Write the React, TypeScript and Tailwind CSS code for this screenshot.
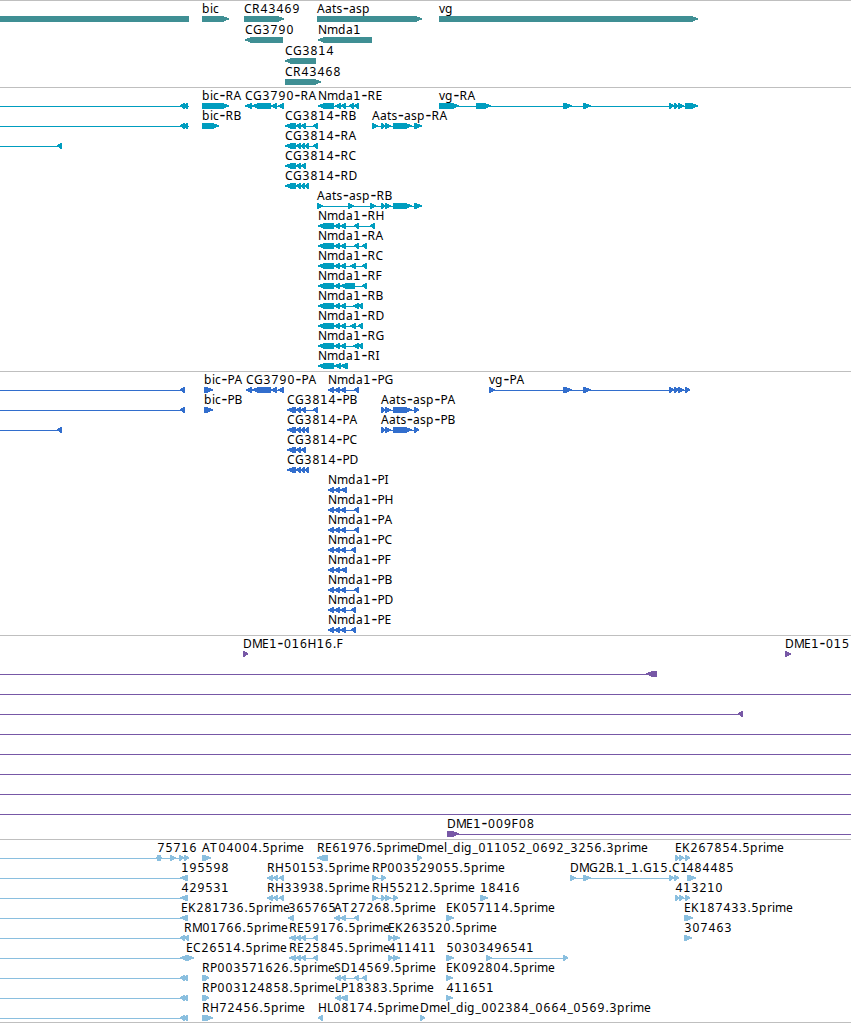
type Dir = "L" | "R" | "N";
type Exon = [number, number, Dir?];
interface Feature {
  label?: string;
  x?: number;
  dir: Dir;
  exons: Exon[];
  line?: [number, number];
}
interface Track {
  name: string;
  color: string;
  rowHeight: number;
  className: string;
  rows: Feature[][];
}

const WIDTH = 851;

/* Advance width in pixels of each character of a feature label. */
const ADVANCE: Record<string, number> = {
  A: 8, B: 7, C: 8, D: 9, E: 7, F: 7, G: 9, H: 9, I: 3, K: 8, L: 6, M: 10, N: 9, P: 7, R: 8, S: 7, T: 8,
  a: 7, b: 8, c: 6, d: 8, e: 7, g: 8, i: 3, l: 3, m: 11, p: 8, r: 5, s: 6, t: 4.5, v: 6,
  "-": 6.5, "_": 6, ".": 4,
};

/* Offset that centres a glyph in its advance. */
const NUDGE: Record<string, number> = { "-": 0.5, ".": 0.5, "_": 0.5, "1": 0 };

interface Run {
  text: string;
  xs: number[];
  kind: "plain" | "one" | "dash";
}

function labelRuns(text: string, start: number): Run[] {
  const runs: Run[] = [];
  let x = start;
  for (const c of text) {
    const kind = c === "1" ? "one" : c === "-" ? "dash" : "plain";
    const at = x + (NUDGE[c] ?? (/\d/.test(c) ? 0.5 : 0));
    const last = runs[runs.length - 1];
    if (last && last.kind === kind) {
      last.text += c;
      last.xs.push(at);
    } else {
      runs.push({ text: c, xs: [at], kind });
    }
    x += ADVANCE[c] ?? 8;
  }
  return runs;
}

const RUN_CLASS = {
  plain: "font-['Noto_Sans',sans-serif] text-[12px]",
  one: "font-['DejaVu_Sans',sans-serif] text-[12px]",
  dash: "font-['Noto_Sans',sans-serif] text-[18px]",
};

function f(label: string, x: number, dir: Dir, ...exons: Exon[]): Feature {
  return { label, x, dir, exons };
}

function bare(to: number, dir: Dir, ...exons: Exon[]): Feature {
  return { dir, exons, line: [0, to] };
}

const nmdaR: Exon[] = [[318, 334], [334, 340], [340, 346]];
const nmdaP: Exon[] = [[328, 334], [334, 340], [340, 346]];
const nmdaPShort: Exon[] = [[328, 334], [334, 340], [340, 347]];
const aatsTail: Exon[] = [[381, 385], [385, 391], [393, 412], [414, 422]];
const aatsP: Exon[] = [[381, 385], [385, 391], [393, 412], [414, 419]];
const cgRC: Exon[] = [[285, 296], [296, 301], [301, 306]];
const cgRD: Exon[] = [[285, 296], [296, 301], [301, 305], [305, 309]];
const cgPC: Exon[] = [[287, 296], [296, 301], [301, 306]];
const cgPD: Exon[] = [[287, 296], [296, 301], [301, 305], [305, 309]];
const rh: Exon[] = [[267, 273], [273, 278], [279, 284]];
const re: Exon[] = [[289, 296], [296, 301], [301, 306], [313, 318]];
const ek26: Exon[] = [[675, 679], [679, 684], [685, 690]];

const tracks: Track[] = [
  {
    name: "Genes",
    color: "#3f8f94",
    rowHeight: 21,
    className: "pt-[2px]",
    rows: [
      [
        { dir: "N", exons: [[0, 189]] },
        f("bic", 202, "R", [202, 229]),
        f("CR43469", 244, "R", [244, 284]),
        f("Aats-asp", 317, "R", [317, 422]),
        f("vg", 439, "R", [439, 698]),
      ],
      [f("CG3790", 245, "L", [245, 283]), f("Nmda1", 318, "L", [318, 372])],
      [f("CG3814", 285, "L", [285, 316])],
      [f("CR43468", 285, "R", [285, 321])],
    ],
  },
  {
    name: "Transcripts",
    color: "#009dbf",
    rowHeight: 20,
    className: "pt-[2px] pb-px",
    rows: [
      [
        bare(189, "L", [180, 185], [184, 188]),
        f("bic-RA", 202, "R", [202, 229]),
        f("CG3790-RA", 245, "L", [245, 252], [252, 271], [271, 277], [278, 284]),
        f("Nmda1-RE", 318, "L", [318, 334], [335, 341], [341, 346], [349, 354], [354, 359]),
        f("vg-RA", 439, "R", [439, 459], [476, 491], [563, 572], [583, 591], [669, 674], [674, 678], [678, 684], [685, 698]),
      ],
      [
        bare(189, "L", [180, 185], [184, 188]),
        f("bic-RB", 202, "R", [202, 219]),
        f("CG3814-RB", 285, "L", ...cgRC, [313, 318]),
        f("Aats-asp-RA", 372, "R", [372, 378], ...aatsTail),
      ],
      [bare(62, "L", [57, 62]), f("CG3814-RA", 285, "L", ...cgRD, [313, 318])],
      [f("CG3814-RC", 285, "L", ...cgRC)],
      [f("CG3814-RD", 285, "L", ...cgRD)],
      [f("Aats-asp-RB", 317, "R", [317, 323], [348, 354], [370, 376], ...aatsTail)],
      [f("Nmda1-RH", 318, "L", ...nmdaR, [354, 359], [370, 375])],
      [f("Nmda1-RA", 318, "L", ...nmdaR, [354, 359], [362, 367])],
      [f("Nmda1-RC", 318, "L", ...nmdaR, [350, 356], [362, 367])],
      [f("Nmda1-RF", 318, "L", [318, 334], [334, 340], [340, 355], [362, 367])],
      [f("Nmda1-RB", 318, "L", ...nmdaR, [353, 359], [358, 363])],
      [f("Nmda1-RD", 318, "L", ...nmdaR, [350, 356], [358, 363])],
      [f("Nmda1-RG", 318, "L", ...nmdaR, [353, 359], [358, 363])],
      [f("Nmda1-RI", 318, "L", [318, 334], [334, 341], [340, 348])],
    ],
  },
  {
    name: "Proteins",
    color: "#326ecd",
    rowHeight: 20,
    className: "pt-[2px] pb-px",
    rows: [
      [
        bare(185, "L", [180, 185]),
        f("bic-PA", 204, "R", [204, 213]),
        f("CG3790-PA", 246, "L", [246, 252], [252, 271], [271, 277], [278, 284]),
        f("Nmda1-PG", 328, "L", ...nmdaP, [354, 359]),
        f("vg-PA", 489, "R", [489, 495], [563, 572], [583, 591], [669, 674], [674, 679], [678, 684], [685, 690]),
      ],
      [
        bare(185, "L", [180, 185]),
        f("bic-PB", 204, "R", [204, 213]),
        f("CG3814-PB", 287, "L", ...cgPC, [313, 318]),
        f("Aats-asp-PA", 381, "R", ...aatsP),
      ],
      [
        bare(62, "L", [57, 62]),
        f("CG3814-PA", 287, "L", ...cgPD),
        f("Aats-asp-PB", 381, "R", ...aatsP),
      ],
      [f("CG3814-PC", 287, "L", ...cgPC)],
      [f("CG3814-PD", 287, "L", ...cgPD)],
      [f("Nmda1-PI", 328, "L", ...nmdaPShort)],
      [f("Nmda1-PH", 328, "L", ...nmdaP, [354, 359])],
      [f("Nmda1-PA", 328, "L", ...nmdaP, [354, 359])],
      [f("Nmda1-PC", 328, "L", ...nmdaP, [351, 356])],
      [f("Nmda1-PF", 328, "L", ...nmdaPShort)],
      [f("Nmda1-PB", 328, "L", ...nmdaP, [354, 359])],
      [f("Nmda1-PD", 328, "L", ...nmdaP, [351, 356])],
      [f("Nmda1-PE", 328, "L", ...nmdaP, [351, 356])],
    ],
  },
  {
    name: "BAC ends",
    color: "#7758a6",
    rowHeight: 20,
    className: "pt-[2px] pb-px",
    rows: [
      [f("DME1-016H16.F", 243, "R", [243, 248]), f("DME1-015", 785, "R", [785, 791])],
      [bare(657, "L", [646, 657])],
      [bare(WIDTH, "L")],
      [bare(743, "L", [738, 743])],
      [bare(WIDTH, "L")],
      [bare(WIDTH, "L")],
      [bare(WIDTH, "L")],
      [bare(WIDTH, "L")],
      [bare(WIDTH, "L")],
      [{ ...f("DME1-009F08", 447, "R", [447, 459]), line: [447, WIDTH] }],
    ],
  },
  {
    name: "ESTs",
    color: "#8abfdf",
    rowHeight: 20,
    className: "pt-[2px]",
    rows: [
      [
        { label: "75716", x: 157, dir: "R", line: [0, 189], exons: [[156, 161, "L"], [157, 162], [170, 176], [179, 184], [184, 189]] },
        f("AT04004.5prime", 202, "R", [202, 211]),
        f("RE61976.5prime", 317, "L", [317, 328]),
        f("Dmel_dig_011052_0692_3256.3prime", 417, "R", [417, 422]),
        f("EK267854.5prime", 675, "R", ...ek26),
      ],
      [
        { label: "195598", x: 181, dir: "L", line: [0, 188], exons: [[180, 188]] },
        f("RH50153.5prime", 267, "L", ...rh),
        f("RP003529055.5prime", 372, "R", [372, 378], [381, 386]),
        f("DMG2B.1_1.G15.C1", 570, "R", [570, 576], [583, 591], [669, 674], [674, 679]),
        f("484485", 686, "R", [687, 696]),
      ],
      [
        { label: "429531", x: 181, dir: "L", line: [0, 188], exons: [[180, 188]] },
        f("RH33938.5prime", 267, "L", ...rh),
        f("RH55212.5prime", 372, "R", [372, 378], [381, 385], [385, 391], [393, 398]),
        f("18416", 480, "R", [480, 488]),
        f("413210", 675, "R", ...ek26),
      ],
      [
        { label: "EK281736.5prime", x: 181, dir: "L", line: [0, 188], exons: [[180, 188]] },
        f("365765", 288, "L", [288, 294]),
        f("AT27268.5prime", 334, "L", [334, 340], [340, 346], [354, 359]),
        f("EK057114.5prime", 446, "R", [446, 454]),
        f("EK187433.5prime", 684, "R", [684, 693]),
      ],
      [
        { label: "RM01766.5prime", x: 184, dir: "L", line: [0, 189], exons: [[180, 185], [184, 189]] },
        f("RE59176.5prime", 289, "L", ...re),
        f("EK263520.5prime", 388, "R", [388, 393], [393, 400]),
        f("307463", 684, "R", [684, 692]),
      ],
      [
        { label: "EC26514.5prime", x: 186, dir: "L", line: [0, 189], exons: [[180, 187], [186, 194, "R"]] },
        f("RE25845.5prime", 289, "L", ...re),
        f("411411", 388, "R", [388, 393], [393, 400]),
        f("50303", 446, "R", [446, 454]),
        f("496541", 486, "R", [486, 492], [563, 568]),
      ],
      [
        bare(188, "L", [180, 185], [184, 188]),
        f("RP003571626.5prime", 202, "R", [202, 206], [204, 209]),
        f("SD14569.5prime", 334, "L", [335, 341], [341, 346], [354, 359], [362, 367]),
        f("EK092804.5prime", 446, "R", [446, 453]),
      ],
      [
        bare(188, "L", [180, 185], [184, 188]),
        f("RP003124858.5prime", 202, "R", [202, 206], [204, 209]),
        f("LP18383.5prime", 335, "L", [335, 341], [340, 348]),
        f("411651", 446, "R", [446, 453]),
      ],
      [
        bare(188, "L", [180, 185], [184, 188]),
        f("RH72456.5prime", 202, "R", [202, 206], [204, 213]),
        f("HL08174.5prime", 318, "L", [318, 323]),
        f("Dmel_dig_002384_0664_0569.3prime", 420, "R", [420, 425]),
      ],
    ],
  },
];

const TOP = 13;
const HEAD = 7;

function exonPath([a, b, own]: Exon, dir: Dir) {
  const d = own ?? dir;
  const h = Math.min(HEAD, b - a);
  const bottom = TOP + 6;
  const mid = TOP + 3;
  if (d === "R") return `M${a} ${TOP}H${b - h + 1}L${b} ${mid - 0.6}V${mid + 0.4}L${b - h + 1} ${bottom}H${a}Z`;
  if (d === "L") return `M${b} ${TOP}H${a + h - 1}L${a} ${mid - 0.6}V${mid + 0.4}L${a + h - 1} ${bottom}H${b}Z`;
  return `M${a} ${TOP}H${b}V${bottom}H${a}Z`;
}

function FeatureGlyph({ feature, color }: { feature: Feature; color: string }) {
  const { exons, dir, line, label, x = 0 } = feature;
  const span = line ?? [exons[0][0], exons[exons.length - 1][1]];
  const [from, to] = exons.length > 1 || line ? span : [0, 0];
  return (
    <g>
      {to > from && <rect x={from} y={TOP + 3} width={to - from} height={1} fill={color} />}
      {exons.map((exon, i) => (
        <path key={i} d={exonPath(exon, dir)} fill={color} />
      ))}
      {label && (
        <text fill="#000">
          {labelRuns(label, x).map((run, i) => (
            <tspan key={i} x={run.xs.join(" ")} y={run.kind === "dash" ? 11 : 10} className={RUN_CLASS[run.kind]}>
              {run.text}
            </tspan>
          ))}
        </text>
      )}
    </g>
  );
}

function TrackPanel({ track }: { track: Track }) {
  return (
    <section aria-label={track.name} className={`flex flex-col border-t border-[#bfbfbf] ${track.className}`}>
      {track.rows.map((row, i) => (
        <svg
          key={i}
          width={WIDTH}
          height={track.rowHeight}
          className="block shrink-0 overflow-visible text-[12px]"
          shapeRendering="crispEdges"
        >
          {row.map((feature, j) => (
            <FeatureGlyph key={j} feature={feature} color={track.color} />
          ))}
        </svg>
      ))}
    </section>
  );
}

export default function App() {
  return (
    <main className="flex h-[1023px] w-[851px] flex-col overflow-hidden border-b border-[#bfbfbf] bg-white">
      {tracks.map((track) => (
        <TrackPanel key={track.name} track={track} />
      ))}
    </main>
  );
}
